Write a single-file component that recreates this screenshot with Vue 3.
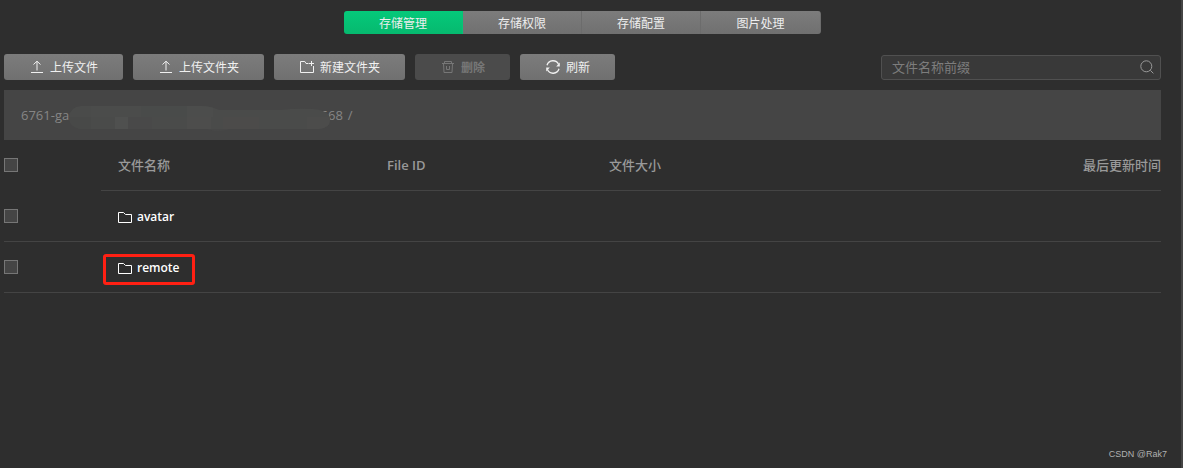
<script setup>
import { ref } from 'vue'

const tabs = ['存储管理', '存储权限', '存储配置', '图片处理']
const active = ref(0)
const prefix = ref('')
const actions = [
  { icon: 'upload', label: '上传文件' },
  { icon: 'upload', label: '上传文件夹' },
  { icon: 'newFolder', label: '新建文件夹' },
  { icon: 'trash', label: '删除', disabled: true },
  { icon: 'refresh', label: '刷新' },
]
const rows = [{ name: 'avatar' }, { name: 'remote', marked: true }]
</script>

<template>
  <div class="page">
    <main class="content">
      <nav class="tabs">
        <button
          v-for="(tab, i) in tabs"
          :key="tab"
          type="button"
          class="tab"
          :class="{ active: active === i }"
          @click="active = i"
        >{{ tab }}</button>
      </nav>

      <div class="toolbar">
        <button v-for="a in actions" :key="a.label" type="button" class="btn" :disabled="a.disabled">
          <svg class="icon" viewBox="0 0 14 14" aria-hidden="true">
            <template v-if="a.icon === 'upload'">
              <path d="M1 12.5H13M7 10.5V1.5M3.5 4.5L7 1.2L10.5 4.5" />
            </template>
            <template v-else-if="a.icon === 'newFolder'">
              <path d="M8.5 3.5H6L4.8 1.5H.5V12.5H13.5V6M11.5 1V6M9 3.5H14" />
            </template>
            <template v-else-if="a.icon === 'trash'">
              <path d="M1 3.5H13M3.5 3.5V1.5H10.5V3.5M2.5 3.5L3 12.5H11L11.5 3.5M5.5 6V9.5H8.5V6" />
            </template>
            <template v-else>
              <path class="bold" d="M1 5.2A6.2 6.2 0 0 1 12.6 4.4M13 8.8A6.2 6.2 0 0 1 1.4 9.6" />
              <path class="solid" d="M13.8 2.4V6.4H10.2ZM.2 11.6V7.6H3.8Z" />
            </template>
          </svg>
          <span>{{ a.label }}</span>
        </button>
        <div class="search">
          <input v-model="prefix" type="text" placeholder="文件名称前缀" aria-label="文件名称前缀" />
          <svg class="lens" viewBox="0 0 14 14" aria-hidden="true">
            <circle cx="6.3" cy="6.3" r="5.5" />
            <path d="M10.3 10.3L13.4 13.4" />
          </svg>
        </div>
      </div>

      <div class="path">
        <span>6761-gar</span>
        <svg class="smudge" viewBox="0 0 262 36" aria-hidden="true">
          <defs>
            <clipPath id="smear">
              <path d="M12 9H132Q142 9 150 13H212Q226 11 244 12Q262 14 261 23Q261 31 250 32H160Q150 36 138 32H12Q0 30 0 20Q1 10 12 9Z" />
            </clipPath>
          </defs>
          <g clip-path="url(#smear)">
            <rect width="262" height="36" fill="#4a4b4a" />
            <rect x="22" y="7" width="50" height="13" fill="#4b4c4b" />
            <rect x="72" y="7" width="46" height="13" fill="#494b4a" />
            <rect x="118" y="7" width="26" height="13" fill="#4c4d4c" />
            <rect x="0" y="20" width="22" height="12" fill="#484948" />
            <rect x="46" y="20" width="13" height="12" fill="#4f504f" />
            <rect x="59" y="20" width="24" height="12" fill="#494949" />
            <rect x="118" y="20" width="24" height="12" fill="#4d4d4c" />
            <rect x="154" y="20" width="36" height="12" fill="#4c4b4a" />
            <rect x="238" y="20" width="24" height="12" fill="#4c4c4b" />
            <rect y="32" width="262" height="4" fill="#474747" />
          </g>
        </svg>
        <span>568</span>
        <span class="slash">/</span>
      </div>

      <table>
        <colgroup>
          <col class="c-check" /><col class="c-name" /><col class="c-id" /><col />
          <col class="c-time" />
        </colgroup>
        <thead>
          <tr>
            <th class="check"><input type="checkbox" aria-label="全选" /></th>
            <th>文件名称</th>
            <th class="latin">File ID</th>
            <th>文件大小</th>
            <th class="time">最后更新时间</th>
          </tr>
        </thead>
        <tbody>
          <tr v-for="row in rows" :key="row.name">
            <td class="check"><input type="checkbox" :aria-label="row.name" /></td>
            <td class="name">
              <a href="#" class="file" @click.prevent>
                <svg class="folder" viewBox="0 0 14 12" aria-hidden="true">
                  <path d="M.5 11.5V1.5H5.5L7.5 3.5H13.5V11.5Z" />
                </svg>
                <span>{{ row.name }}</span>
              </a>
              <span v-if="row.marked" class="marker"></span>
            </td>
            <td></td>
            <td></td>
            <td></td>
          </tr>
        </tbody>
      </table>
    </main>
    <footer>CSDN @Rak7</footer>
  </div>
</template>

<style>
body {
  background: #2e2e2e;
}
</style>

<style scoped>
.page {
  box-sizing: border-box;
  display: flex;
  flex-direction: column;
  min-height: 100vh;
  padding: 11px 20px 0 4px;
  border-right: 2px solid #444;
  background: #2e2e2e;
  color: #999;
  font: 13px/18px "Noto Sans", "Noto Sans CJK SC", sans-serif;
}
.content {
  flex: 1;
}
button,
input {
  font-family: inherit;
  margin: 0;
}
.tabs {
  display: flex;
  width: fit-content;
  margin: 0 auto;
  border-radius: 3px;
  overflow: hidden;
}
.tab {
  width: 119px;
  height: 23px;
  padding: 2px 0 0;
  border: 0;
  border-right: 1px solid #6c6c6c;
  background: linear-gradient(#7c7c7c, #707070);
  color: #eee;
  font-size: 12px;
  line-height: 21px;
}
.tab:last-child {
  width: 120px;
}
.tab.active {
  border-color: #04c576;
  background: linear-gradient(#05c97a, #06b96f);
}
.toolbar {
  display: flex;
  align-items: center;
  gap: 10px;
  margin-top: 20px;
}
.btn {
  display: flex;
  align-items: center;
  gap: 6px;
  height: 26px;
  padding: 0 25px 0 26px;
  border: 0;
  border-radius: 3px;
  background: linear-gradient(#7c7c7c, #707070);
  color: #f0f0f0;
  font-size: 12px;
  line-height: 24px;
  white-space: nowrap;
}
.btn span {
  padding-top: 2px;
}
.btn:disabled {
  background: #4b4b4b;
  color: #777;
}
.btn:disabled span {
  font-weight: 600;
}
.icon {
  width: 14px;
  height: 14px;
  fill: none;
  stroke: currentColor;
  stroke-width: 1;
}
.icon .bold {
  stroke-width: 1.3;
}
.icon .solid {
  fill: currentColor;
  stroke: none;
}
.search {
  box-sizing: border-box;
  display: flex;
  align-items: center;
  width: 280px;
  height: 25px;
  margin-left: auto;
  padding: 0 6px 0 10px;
  border: 1px solid #505050;
  border-radius: 3px;
  background: #393939;
}
.search input {
  flex: 1;
  min-width: 0;
  padding: 0;
  border: 0;
  outline: 0;
  background: none;
  color: #ccc;
  font-size: 13px;
}
.search input::placeholder {
  color: #7d7d7d;
}
.lens {
  width: 14px;
  height: 14px;
  fill: none;
  stroke: #999;
}
.path {
  display: flex;
  align-items: center;
  height: 50px;
  margin-top: 10px;
  padding-left: 17px;
  background: #454545;
  color: #858585;
  font-family: "Open Sans", sans-serif;
}
.smudge {
  position: relative;
  width: 262px;
  height: 36px;
  margin: 0 -10px 0 -6px;
}
.slash {
  margin-left: 5px;
}
table {
  width: 100%;
  table-layout: fixed;
  border-collapse: separate;
  border-spacing: 0;
}
.c-check {
  width: 97px;
}
.c-name {
  width: 269px;
}
.c-id {
  width: 222px;
}
.c-time {
  width: 120px;
}
th,
td {
  height: 50px;
  padding: 0 0 0 17px;
  border-bottom: 1px solid #444;
  text-align: left;
}
th {
  font-weight: 500;
}
th.latin {
  font-family: "Open Sans", sans-serif;
  font-weight: 600;
}
th.check {
  border-color: transparent;
}
th.time {
  text-align: right;
}
.check {
  padding: 0;
}
.check input {
  appearance: none;
  display: block;
  box-sizing: border-box;
  width: 14px;
  height: 14px;
  border: 1px solid #767676;
  background: #454545;
}
.name {
  position: relative;
}
.file {
  display: flex;
  align-items: center;
  gap: 5px;
  color: #fff;
  font-family: "Open Sans", sans-serif;
  font-size: 12px;
  font-weight: 600;
  text-decoration: none;
}
.file span {
  padding-top: 2px;
}
.folder {
  width: 14px;
  height: 12px;
  margin-top: 2px;
  fill: none;
  stroke: #fff;
}
.marker {
  position: absolute;
  inset: 12px auto auto 2px;
  box-sizing: border-box;
  width: 92px;
  height: 31px;
  border: 3px solid #ff2013;
  border-radius: 3px;
}
footer {
  margin-right: -6px;
  padding-bottom: 6px;
  color: #b0b0b0;
  font: 9px/16px "Liberation Sans", sans-serif;
  text-align: right;
}
</style>
